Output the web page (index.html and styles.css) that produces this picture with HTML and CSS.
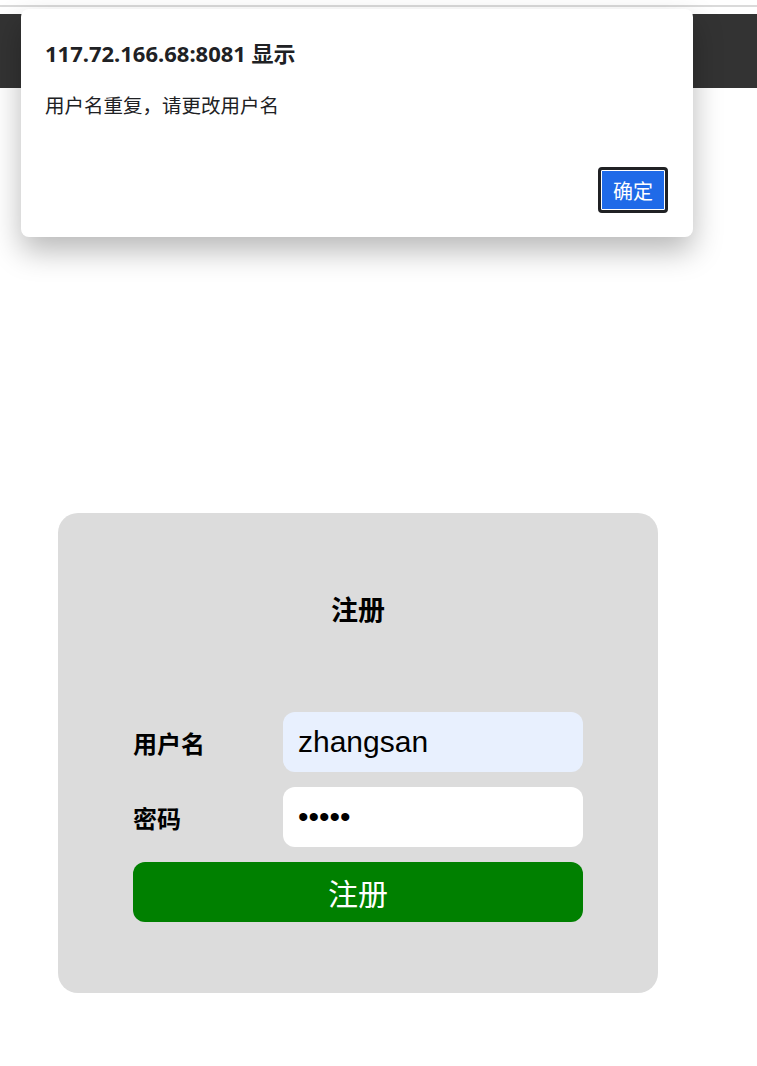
FILE: index.html
```html
<!DOCTYPE html>
<html lang="zh">
<head>
  <meta charset="UTF-8">
  <meta name="viewport" content="width=device-width, initial-scale=1.0">
  <title>注册</title>
  <link rel="stylesheet" href="styles.css">
</head>
<body>
  <div class="topline"></div>
  <div class="header"></div>

  <div class="box">
    <h3 class="title">注册</h3>
    <form class="regForm">
      <div class="row">
        <label for="userName">用户名</label>
        <input class="userName" id="userName" type="text" value="zhangsan">
      </div>
      <div class="row">
        <label for="password">密码</label>
        <input class="password" id="password" type="password" value="12345">
      </div>
      <button type="button" id="regbtn">注册</button>
    </form>
  </div>

  <!-- alert popup -->
  <div class="dialog">
    <div class="dialogTitle">117.72.166.68:8081 显示</div>
    <div class="dialogMsg">用户名重复，请更改用户名</div>
    <div class="dialogBtns">
      <button type="button" class="okBtn">确定</button>
    </div>
  </div>
</body>
</html>
```

FILE: styles.css
```css
body{
  margin: 0;
  background-color: white;
  font-family: "Liberation Sans", "Noto Sans CJK SC", sans-serif;
}
.topline{
  height: 5px;
  border-bottom: 2px solid rgb(218, 218, 218);
  margin-bottom: 7px;
}
.header{
  height: 74px;
  background-color: rgb(51, 51, 51);
}
.box{
  background-color: rgb(220, 220, 220);
  width: 450px;
  margin: 425px 0 0 58px;
  padding: 80px 75px 71px 75px;
  border-radius: 20px;
}
.title{
  margin: 0;
  text-align: center;
  font-size: 27px;
  line-height: 36px;
  font-weight: bold;
}
.regForm{
  margin-top: 83px;
  display: grid;
  gap: 15px;
}
.row{
  display: flex;
  align-items: center;
}
.row label{
  width: 150px;
  font-size: 24px;
  font-weight: bold;
}
.userName, .password{
  width: 300px;
  height: 60px;
  box-sizing: border-box;
  border: none;
  border-radius: 12px;
  padding: 0 15px;
  font-size: 30px;
  font-family: "Liberation Sans", sans-serif;
  background-color: white;
  outline: none;
}
.userName{
  background-color: rgb(232, 240, 254);
}
#regbtn{
  height: 60px;
  border: none;
  border-radius: 12px;
  background-color: rgb(0, 128, 0);
  color: white;
  font-size: 30px;
  font-family: "Liberation Sans", "Noto Sans CJK SC", sans-serif;
}

.dialog{
  position: absolute;
  left: 21px;
  top: 9px;
  width: 672px;
  height: 228px;
  box-sizing: border-box;
  padding: 28px 24px 0 24px;
  background-color: white;
  border-radius: 8px;
  box-shadow: 0 14px 30px rgba(0, 0, 0, 0.28);
  font-family: "Segoe UI", "Noto Sans", "Noto Sans CJK SC", sans-serif;
  color: rgb(32, 33, 36);
}
.dialogTitle{
  font-size: 22px;
  font-weight: bold;
  line-height: 32px;
}
.dialogMsg{
  margin-top: 24px;
  font-size: 19.5px;
  line-height: 26px;
}
.dialogBtns{
  display: flex;
  justify-content: flex-end;
  margin-top: 48px;
  padding-right: 1px;
}
.okBtn{
  width: 70px;
  height: 46px;
  border: 3px solid rgb(32, 33, 36);
  border-radius: 4px;
  box-shadow: inset 0 0 0 1px white;
  background-color: rgb(31, 106, 232);
  color: white;
  font-size: 20px;
  font-family: "Noto Sans CJK SC", sans-serif;
}
```
